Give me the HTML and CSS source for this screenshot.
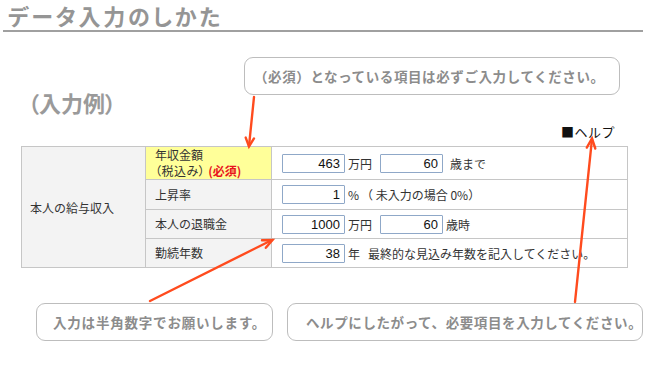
FILE: index.html
```html
<!DOCTYPE html>
<html lang="ja">
<head>
    <meta charset="UTF-8">
    <meta name="viewport" content="width=device-width, initial-scale=1.0">
    <title>データ入力のしかた</title>
    <link rel="stylesheet" href="styles.css">
</head>
<body>
    <div class="page">
        <h1 class="page-title">データ入力のしかた</h1>

        <div class="note note-top">（必須）となっている項目は必ずご入力してください。</div>

        <h2 class="example-title">（入力例）</h2>
        <div class="help-link">■ヘルプ</div>

        <table class="form-table">
            <tr class="row-1">
                <th class="group" rowspan="4">本人の給与収入</th>
                <th class="label required">年収金額<br><span class="tight">（税込み）</span><span class="req">(必須)</span></th>
                <td>
                    <div class="field">
                        <input class="num" value="463" readonly>
                        <span class="unit">万円</span>
                        <input class="num" value="60" readonly>
                        <span class="unit unit-wide">歳まで</span>
                    </div>
                </td>
            </tr>
            <tr class="row-2">
                <th class="label">上昇率</th>
                <td>
                    <div class="field">
                        <input class="num" value="1" readonly>
                        <span class="unit">%</span>
                        <span class="hint">（ 未入力の場合 0%）</span>
                    </div>
                </td>
            </tr>
            <tr class="row-3">
                <th class="label">本人の退職金</th>
                <td>
                    <div class="field">
                        <input class="num" value="1000" readonly>
                        <span class="unit">万円</span>
                        <input class="num" value="60" readonly>
                        <span class="unit">歳時</span>
                    </div>
                </td>
            </tr>
            <tr class="row-4">
                <th class="label">勤続年数</th>
                <td>
                    <div class="field">
                        <input class="num" value="38" readonly>
                        <span class="unit">年</span>
                        <span class="hint">最終的な見込み年数を記入してください。</span>
                    </div>
                </td>
            </tr>
        </table>

        <div class="notes-bottom">
            <div class="note note-left">入力は半角数字でお願いします。</div>
            <div class="note note-right">ヘルプにしたがって、必要項目を入力してください。</div>
        </div>

        <!-- arrows drawn over the page -->
        <svg class="arrows" width="650" height="380" viewBox="0 0 650 380">
            <g fill="none" stroke="#ff4b1e" stroke-width="2.4" stroke-linecap="round">
                <path d="M254 97 L249 146"/>
                <path d="M254 138.4 L249 146.5 L245.7 137.6"/>
                <path d="M150 301 L272 240"/>
                <path d="M265.8 247.8 L272.5 240 L262 240.3"/>
                <path d="M575 302 L592 139"/>
                <path d="M595.3 148.5 L592 138.5 L586.8 147.6"/>
            </g>
        </svg>
    </div>
</body>
</html>
```

FILE: styles.css
```css
* { margin: 0; padding: 0; box-sizing: border-box; }
body {
    font-family: "Noto Sans CJK JP", "Liberation Sans", sans-serif;
    background: #fff;
    color: #333;
}
.page {
    position: relative;
    width: 650px;
    height: 380px;
    overflow: hidden;
}
.page-title {
    width: 640px;
    margin-left: 3px;
    height: 32px;
    padding: 1px 0 0 5px;
    font-size: 22px;
    line-height: 29px;
    font-weight: bold;
    color: #959595;
    border-bottom: 2px solid #a0a0a0;
    font-feature-settings: "palt";
    letter-spacing: 2.8px;
}
.note {
    height: 38px;
    border: 1px solid #bdbdbd;
    border-radius: 9px;
    font-size: 13.5px;
    line-height: 36px;
    font-weight: bold;
    color: #8c8c8c;
    white-space: nowrap;
    letter-spacing: 0.8px;
}
.note-top {
    width: 376px;
    margin: 25px 0 0 244px;
    padding-left: 9px;
    letter-spacing: 0.6px;
}
.example-title {
    margin: -7px 0 0 28px;
    height: 28px;
    font-size: 22px;
    line-height: 28px;
    font-weight: bold;
    color: #9a9a9a;
    font-feature-settings: "palt";
}
.help-link {
    height: 30px;
    padding: 6px 35px 0 0;
    text-align: right;
    font-size: 13px;
    line-height: 20px;
    color: #111;
    letter-spacing: 0.5px;
}
.form-table {
    margin-left: 21px;
    width: 607px;
    border-collapse: collapse;
    font-size: 12px;
    color: #333;
}
.form-table th,
.form-table td {
    border: 1px solid #c6c6c6;
    text-align: left;
    font-weight: normal;
    vertical-align: middle;
}
.form-table th.group {
    width: 124px;
    padding-left: 8px;
    background: #f3f3f3;
}
.form-table th.label {
    width: 126px;
    padding-left: 9px;
    background: #f3f3f3;
    line-height: 16px;
}
.form-table th.required { background: #ffff99; }
.tight { font-feature-settings: "palt"; letter-spacing: 0.5px; }
.req {
    margin-left: 3px;
    color: #e8141e;
    font-weight: bold;
}
.form-table td { padding-left: 10px; }
.row-1 { height: 33px; }
.row-2 { height: 30px; }
.row-3 { height: 29px; }
.row-4 { height: 29px; }
.field {
    display: flex;
    align-items: center;
}
.num {
    width: 63px;
    height: 19px;
    border: 1px solid #8fa8c8;
    border-radius: 1px;
    padding-right: 4px;
    text-align: right;
    font-family: "Liberation Sans", Arial, sans-serif;
    font-size: 13px;
    color: #111;
    background: #fff;
    outline: none;
}
.unit {
    margin: 0 8px 0 3px;
    color: #333;
}
.unit-wide { margin-left: 7px; }
.hint { color: #333; }
.row-2 .unit { margin-right: 2px; }
.notes-bottom {
    display: flex;
    gap: 14px;
    margin: 35px 0 0 36px;
}
.note-left {
    width: 237px;
    padding-left: 16px;
}
.note-right {
    width: 356px;
    padding-left: 18px;
    letter-spacing: 0.6px;
}
.arrows {
    position: absolute;
    left: 0;
    top: 0;
    pointer-events: none;
}
```
